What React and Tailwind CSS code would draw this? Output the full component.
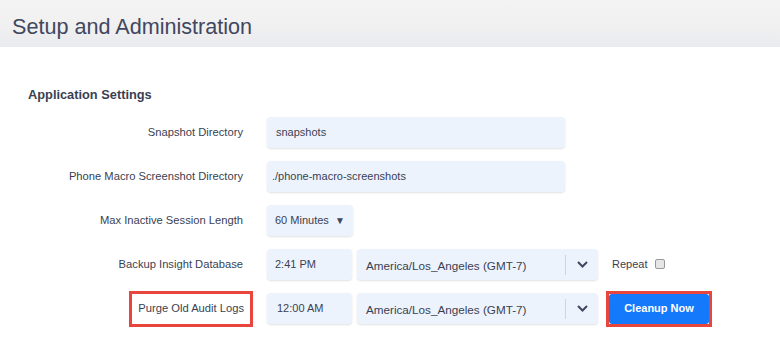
import React from "react";

const font = { fontFamily: '"Liberation Sans", Arial, sans-serif' };

function Field({ className = "", children }) {
  return (
    <div
      className={`h-[31px] flex items-center rounded-[4px] bg-[#edf3fd] shadow-[0_1px_2px_rgba(0,0,0,0.12)] text-[11px] text-[#3a3f52] ${className}`}
    >
      {children}
    </div>
  );
}

function TzSelect() {
  return (
    <Field className="w-[241px] pl-[9px]">
      <span className="flex-1 pt-[3px] text-[11.7px]">America/Los_Angeles (GMT-7)</span>
      <div className="h-[20px] w-px bg-[#cfd3da]" />
      <div className="w-[32px] flex items-center justify-center">
        <svg width="11" height="7" viewBox="0 0 11 7">
          <path d="M1 1 L5.5 5.5 L10 1" fill="none" stroke="#3f4660" strokeWidth="2" />
        </svg>
      </div>
    </Field>
  );
}

function Label({ children, boxed }) {
  return (
    <div className="w-[225px] flex justify-end">
      {boxed ? (
        <div className="h-[36px] flex items-center px-[6px] border-[3px] border-[#e8453c] text-[11.2px] text-[#3a3f52]">
          {children}
        </div>
      ) : (
        <div className="pr-[10px] text-[11.2px] text-[#3a3f52]">{children}</div>
      )}
    </div>
  );
}

export default function App() {
  return (
    <div className="w-[780px] h-[338px] bg-white overflow-hidden" style={font}>
      <div className="h-[47px] bg-gradient-to-b from-[#f3f3f3] via-[#f1f1f1] to-[#eaebef] flex items-center pl-[12px]">
        <h1 className="text-[21.6px] text-[#41475e] pt-[7px]">Setup and Administration</h1>
      </div>
      <div className="pl-[28px]">
        <h2 className="mt-[38px] h-[20px] leading-[20px] text-[12.8px] font-bold text-[#3a3f52]">
          Application Settings
        </h2>
        <div className="mt-[12px] flex flex-col gap-[13px]">
          <div className="h-[31px] flex items-center gap-[14px]">
            <Label>Snapshot Directory</Label>
            <Field className="w-[298px] pl-[9px]">snapshots</Field>
          </div>
          <div className="h-[31px] flex items-center gap-[14px]">
            <Label>Phone Macro Screenshot Directory</Label>
            <Field className="w-[298px] pl-[5px] text-[10.7px]">./phone-macro-screenshots</Field>
          </div>
          <div className="h-[31px] flex items-center gap-[14px]">
            <Label>Max Inactive Session Length</Label>
            <Field className="w-[86px] pl-[8px] pr-[8px] justify-between">
              <span>60 Minutes</span>
              <span className="text-[10px] text-[#3f4660]">▼</span>
            </Field>
          </div>
          <div className="h-[31px] flex items-center gap-[14px]">
            <Label>Backup Insight Database</Label>
            <div className="flex items-center gap-[5px]">
              <Field className="w-[85px] pl-[8px]">2:41 PM</Field>
              <TzSelect />
            </div>
            <div className="flex items-center gap-[8px] text-[11px] text-[#3a3f52]">
              <span>Repeat</span>
              <span className="w-[10px] h-[10px] rounded-[2px] border border-[#9a9a9a] bg-[#e6e6e6] mb-[2px]" />
            </div>
          </div>
          <div className="h-[31px] flex items-center gap-[14px]">
            <Label boxed>Purge Old Audit Logs</Label>
            <div className="flex items-center gap-[5px]">
              <Field className="w-[85px] pl-[10px]">12:00 AM</Field>
              <TzSelect />
            </div>
            <div className="-ml-[6px] w-[106px] h-[36px] border-[3px] border-[#e8453c] flex">
              <button className="flex-1 rounded-[3px] bg-[#1479fb] text-white text-[11px] font-bold">
                Cleanup Now
              </button>
            </div>
          </div>
        </div>
      </div>
    </div>
  );
}
